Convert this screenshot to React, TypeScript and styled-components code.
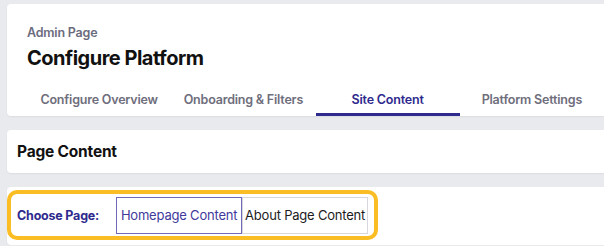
import React, { useState } from "react";
import styled, { createGlobalStyle } from "styled-components";

const GlobalStyle = createGlobalStyle`
  body {
    margin: 0;
    background: #e9eaed;
    font-family: "Inter", "Inter Variable", "Noto Sans", sans-serif;
    overflow: hidden;
  }
`;

const tabs = ["Configure Overview", "Onboarding & Filters", "Site Content", "Platform Settings"];
const pages = ["Homepage Content", "About Page Content"];

export default function App() {
  const [activeTab, setActiveTab] = useState("Site Content");
  const [activePage, setActivePage] = useState("Homepage Content");

  return (
    <>
      <GlobalStyle />
      <Page>
        <HeaderCard>
          <Eyebrow>Admin Page</Eyebrow>
          <Title>Configure Platform</Title>
          <TabList>
            {tabs.map((tab) => (
              <Tab key={tab} $active={tab === activeTab} onClick={() => setActiveTab(tab)}>
                {tab}
              </Tab>
            ))}
          </TabList>
        </HeaderCard>
        <SectionCard>
          <SectionTitle>Page Content</SectionTitle>
        </SectionCard>
        <PickerCard>
          <Highlight>
            <PickerLabel>Choose Page:</PickerLabel>
            <ButtonGroup>
              {pages.map((page) => (
                <PageButton
                  key={page}
                  $active={page === activePage}
                  onClick={() => setActivePage(page)}
                >
                  {page}
                </PageButton>
              ))}
            </ButtonGroup>
          </Highlight>
        </PickerCard>
      </Page>
    </>
  );
}

const Page = styled.div`
  display: flex;
  flex-direction: column;
  gap: 14px;
  padding: 4px 0 0 7px;
`;

const Card = styled.div`
  background: #ffffff;
  border-radius: 4px 0 0 4px;
  box-shadow: 0 1px 2px rgba(20, 20, 40, 0.06);
`;

const HeaderCard = styled(Card)`
  display: flex;
  flex-direction: column;
  padding: 21px 0 0 20px;
  height: 112px;
  box-sizing: border-box;
`;

const Eyebrow = styled.div`
  font-size: 12.5px;
  line-height: 16px;
  font-weight: 600;
  letter-spacing: -0.2px;
  color: #6b6b7e;
`;

const Title = styled.h1`
  margin: 5px 0 0;
  font-size: 20px;
  line-height: 24px;
  font-weight: 700;
  color: #111111;
  letter-spacing: -0.5px;
`;

const TabList = styled.div`
  display: flex;
  margin-top: auto;
`;

const Tab = styled.button<{ $active: boolean }>`
  width: 145.5px;
  height: 35px;
  padding: 4px 0 0;
  border: none;
  border-bottom: 3px solid ${({ $active }) => ($active ? "#2e2a8e" : "transparent")};
  background: none;
  font-family: inherit;
  font-size: 12.5px;
  letter-spacing: -0.2px;
  font-weight: 600;
  color: ${({ $active }) => ($active ? "#2e2a8e" : "#6e6e7c")};
  cursor: pointer;
`;

const SectionCard = styled(Card)`
  display: flex;
  align-items: center;
  height: 43px;
  padding-left: 10px;
`;

const SectionTitle = styled.h2`
  margin: 0;
  font-size: 15.5px;
  letter-spacing: -0.2px;
  font-weight: 700;
  color: #111111;
`;

const PickerCard = styled(Card)`
  padding: 3px 0 5px;
  height: 58px;
  box-sizing: border-box;
`;

const Highlight = styled.div`
  display: inline-flex;
  align-items: center;
  gap: 17px;
  height: 50px;
  box-sizing: border-box;
  padding: 0 6px 0 6px;
  border: 4px solid #fbbd24;
  border-radius: 10px;
`;

const PickerLabel = styled.span`
  font-size: 12.5px;
  letter-spacing: -0.2px;
  font-weight: 700;
  color: #2e2a8e;
`;

const ButtonGroup = styled.div`
  display: flex;
`;

const PageButton = styled.button<{ $active: boolean }>`
  width: 126px;
  height: 37px;
  padding: 0;
  background: #ffffff;
  border: 1px solid ${({ $active }) => ($active ? "#6f69b9" : "#d7d7dc")};
  font-family: inherit;
  font-size: 13px;
  letter-spacing: -0.2px;
  color: ${({ $active }) => ($active ? "#3f3a9c" : "#1c1c1c")};
  cursor: pointer;
`;
